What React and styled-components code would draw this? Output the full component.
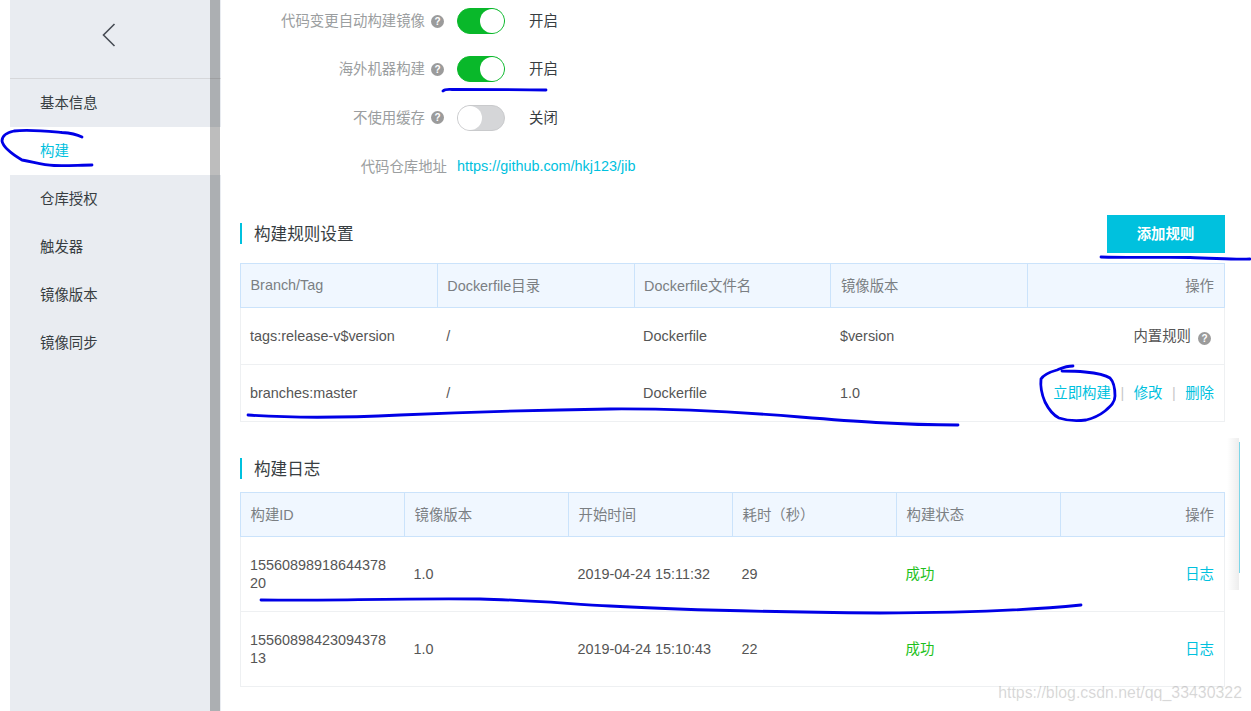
import React from 'react'
import styled, { createGlobalStyle } from 'styled-components'

const cjk = `"Liberation Sans", "Noto Sans CJK SC", sans-serif`

const rules = [
    { branch: 'tags:release-v$version', dir: '/', file: 'Dockerfile', version: '$version', builtin: true },
    { branch: 'branches:master', dir: '/', file: 'Dockerfile', version: '1.0' },
]

const logs = [
    { id: '1556089891864437820', version: '1.0', time: '2019-04-24 15:11:32', cost: '29' },
    { id: '1556089842309437813', version: '1.0', time: '2019-04-24 15:10:43', cost: '22' },
]

export default function App() {
    return (
        <>
            <GlobalStyle />
            <Page>
                <Sidebar>
                    <BackBar>
                        <svg width="16" height="26" viewBox="0 0 16 26" fill="none">
                            <path d="M13.5 2 L2.5 13 L13.5 24" stroke="#474c55" strokeWidth="1.6" />
                        </svg>
                    </BackBar>
                    <NavItem>基本信息</NavItem>
                    <NavItem $active>构建</NavItem>
                    <NavItem>仓库授权</NavItem>
                    <NavItem>触发器</NavItem>
                    <NavItem>镜像版本</NavItem>
                    <NavItem>镜像同步</NavItem>
                    <SideScroll />
                </Sidebar>

                <Main>
                    <FormRow>
                        <FormLabel><LabelText>代码变更自动构建镜像</LabelText><Help>?</Help></FormLabel>
                        <Toggle $on><Knob $on /></Toggle>
                        <ToggleText>开启</ToggleText>
                    </FormRow>
                    <FormRow>
                        <FormLabel><LabelText>海外机器构建</LabelText><Help>?</Help></FormLabel>
                        <Toggle $on><Knob $on /></Toggle>
                        <ToggleText>开启</ToggleText>
                    </FormRow>
                    <FormRow>
                        <FormLabel><LabelText>不使用缓存</LabelText><Help>?</Help></FormLabel>
                        <Toggle><Knob /></Toggle>
                        <ToggleText>关闭</ToggleText>
                    </FormRow>
                    <LinkRow>
                        <FormLabel $plain><LabelText>代码仓库地址</LabelText></FormLabel>
                        <RepoLink>https://github.com/hkj123/jib</RepoLink>
                    </LinkRow>

                    <SectionHead>
                        <SectionTitle>构建规则设置</SectionTitle>
                        <AddButton>添加规则</AddButton>
                    </SectionHead>
                    <Table>
                        <thead>
                            <tr>
                                <Th>Branch/Tag</Th>
                                <Th>Dockerfile目录</Th>
                                <Th>Dockerfile文件名</Th>
                                <Th>镜像版本</Th>
                                <Th $right>操作</Th>
                            </tr>
                        </thead>
                        <tbody>
                            {rules.map((r) => (
                                <tr key={r.branch}>
                                    <RuleCell>{r.branch}</RuleCell>
                                    <RuleCell>{r.dir}</RuleCell>
                                    <RuleCell>{r.file}</RuleCell>
                                    <RuleCell>{r.version}</RuleCell>
                                    {r.builtin ? (
                                        <RuleCell $right $cjk>内置规则<Help $wide>?</Help></RuleCell>
                                    ) : (
                                        <RuleCell $right $cjk>
                                            <Action>立即构建</Action>
                                            <Sep>|</Sep>
                                            <Action>修改</Action>
                                            <Sep>|</Sep>
                                            <Action>删除</Action>
                                        </RuleCell>
                                    )}
                                </tr>
                            ))}
                        </tbody>
                    </Table>

                    <LogHead>
                        <SectionTitle>构建日志</SectionTitle>
                    </LogHead>
                    <Table>
                        <thead>
                            <tr>
                                <Th>构建ID</Th>
                                <Th>镜像版本</Th>
                                <Th>开始时间</Th>
                                <Th>耗时（秒）</Th>
                                <Th>构建状态</Th>
                                <Th $right>操作</Th>
                            </tr>
                        </thead>
                        <tbody>
                            {logs.map((l) => (
                                <tr key={l.id}>
                                    <LogCell><BuildId>{l.id}</BuildId></LogCell>
                                    <LogCell>{l.version}</LogCell>
                                    <LogCell>{l.time}</LogCell>
                                    <LogCell>{l.cost}</LogCell>
                                    <LogCell $cjk><Success>成功</Success></LogCell>
                                    <LogCell $right $cjk><Action>日志</Action></LogCell>
                                </tr>
                            ))}
                        </tbody>
                    </Table>
                </Main>

                <Ink width="1251" height="711" viewBox="0 0 1251 711" fill="none">
                    <path d="M82 137 C76 134 70 133 62 132.500 C46 131 28 129 14 131 C5 133 2 137 2 141 C3 147 12 154 22 160 C34 162 42 165 54 165.500 C68 166 80 165 92 165" />
                    <path d="M443 91 C445 89 448 89.500 452 89.500 C480 89.500 520 89.500 546 90" />
                    <path d="M1101 257 C1130 258 1165 257 1190 257.500 C1215 258 1235 260 1250 259" />
                    <path d="M248 415 C290 418 340 418 400 415 C470 412 540 410 610 409 C680 408.500 740 412 800 417 C850 421 900 425 958 425" />
                    <path d="M1073 366 C1066 366 1062 368 1057 370 C1050 372 1044 374 1041 379 C1040 388 1042 395 1045 402 C1049 410 1053 415 1059 418 C1068 421 1078 421 1086 420 C1094 418 1100 415 1105 411 C1111 406 1115 402 1115 396 C1115 388 1114 382 1110 378 C1104 374 1095 373 1085 372 C1076 371 1068 371 1062 371" />
                    <path d="M261 600 C320 601 400 598 480 599 C530 600 570 604 610 606 C680 610 780 612 880 613 C960 613 1030 610 1081 605" />
                </Ink>
                <EdgeShadow />
                <Watermark>https://blog.csdn.net/qq_33430322</Watermark>
            </Page>
        </>
    )
}

const GlobalStyle = createGlobalStyle`
    html, body {
        margin: 0;
        padding: 0;
        background: #fff;
    }
    body {
        font-family: ${cjk};
        font-size: 14.4px;
        color: #555;
    }
`;
const Page = styled.div`
    position: relative;
    display: flex;
    width: 1251px;
    height: 711px;
    overflow: hidden;
    background: #fff;
`;
const Sidebar = styled.aside`
    position: relative;
    flex: none;
    width: 211px;
    margin-left: 10px;
    background: #e9ecf1;
`;
const SideScroll = styled.div`
    position: absolute;
    top: 0;
    bottom: 0;
    left: 200px;
    width: 10px;
    background: rgba(0, 0, 0, 0.26);
`;
const BackBar = styled.div`
    display: flex;
    justify-content: center;
    align-items: center;
    height: 79px;
    padding-right: 14px;
    padding-bottom: 8px;
    box-sizing: border-box;
    border-bottom: 1px solid #d6d7da;
`;
const NavItem = styled.div`
    height: 48px;
    line-height: 48px;
    padding-left: 30px;
    color: ${(p) => (p.$active ? '#00c1de' : '#373d41')};
    background: ${(p) => (p.$active ? '#fff' : 'transparent')};
`;
const Main = styled.main`
    flex: 1;
    min-width: 0;
    padding: 8px 26px 0 19px;
`;
const FormRow = styled.div`
    display: flex;
    align-items: center;
    height: 26px;
    margin-bottom: 22.4px;
`;
const LinkRow = styled(FormRow)`
    height: 28px;
    margin-bottom: 0;
`;
const FormLabel = styled.div`
    display: flex;
    justify-content: flex-end;
    align-items: center;
    width: 208px;
    padding-right: ${(p) => (p.$plain ? '1px' : '4px')};
    box-sizing: border-box;
    margin-right: 9px;
    color: #9b9ea0;
`;
const LabelText = styled.span`
    padding-bottom: 3px;
`;
const Help = styled.span`
    display: inline-flex;
    justify-content: center;
    align-items: center;
    flex: none;
    width: 13px;
    height: 13px;
    margin-left: ${(p) => (p.$wide ? '7px' : '6px')};
    margin-right: ${(p) => (p.$wide ? '3px' : '0')};
    border-radius: 50%;
    background: #9b9b9b;
    color: #fff;
    font-size: 10px;
    font-weight: 700;
    vertical-align: -1px;
`;
const Toggle = styled.div`
    position: relative;
    flex: none;
    width: 48px;
    height: 26px;
    box-sizing: border-box;
    border-radius: 13px;
    border: 1px solid ${(p) => (p.$on ? '#09b82a' : '#c9cacc')};
    background: ${(p) => (p.$on ? '#09b82a' : '#d5d6d8')};
`;
const Knob = styled.span`
    position: absolute;
    top: 0;
    left: ${(p) => (p.$on ? '22px' : '0')};
    width: 24px;
    height: 24px;
    border-radius: 50%;
    background: #fff;
`;
const ToggleText = styled.div`
    margin-left: 24px;
    padding-bottom: 3px;
    color: #373d41;
`;
const RepoLink = styled.a`
    padding-bottom: 2px;
    color: #00c1de;
`;
const SectionHead = styled.div`
    display: flex;
    justify-content: space-between;
    align-items: center;
    height: 38px;
    margin-top: 33.9px;
    margin-bottom: 10px;
`;
const LogHead = styled.div`
    display: flex;
    align-items: center;
    height: 22px;
    margin-top: 36px;
    margin-bottom: 12px;
`;
const SectionTitle = styled.h3`
    margin: 0 0 1px;
    height: 21px;
    line-height: 24px;
    padding-left: 12px;
    border-left: 2px solid #00c1de;
    font-size: 16.6px;
    font-weight: 400;
    color: #373d41;
`;
const AddButton = styled.button`
    width: 118px;
    height: 38px;
    padding: 0 1px 3px 0;
    border: none;
    background: #00c1de;
    color: #fff;
    font-family: inherit;
    font-size: 14.4px;
    font-weight: 700;
`;
const Table = styled.table`
    width: 985px;
    table-layout: fixed;
    border-collapse: collapse;
    font-size: 14.4px;
`;
const Th = styled.th`
    height: 44px;
    padding: 0 10px 2px 9.5px;
    box-sizing: border-box;
    background: #f0f7ff;
    border: 1px solid #cbe3fb;
    color: #7b7f83;
    font-weight: 400;
    text-align: ${(p) => (p.$right ? 'right' : 'left')};
`;
const Td = styled.td`
    padding: 0 10px ${(p) => (p.$cjk ? '3px' : '0')} 9px;
    box-sizing: border-box;
    border-top: 1px solid #eef0f2;
    border-bottom: 1px solid #eef0f2;
    color: #555;
    text-align: ${(p) => (p.$right ? 'right' : 'left')};
    &:first-child {
        border-left: 1px solid #eef0f2;
    }
    &:last-child {
        border-right: 1px solid #eef0f2;
    }
`;
const RuleCell = styled(Td)`
    height: 57px;
`;
const LogCell = styled(Td)`
    height: 75px;
`;
const BuildId = styled.div`
    width: 138px;
    line-height: 18px;
    word-break: break-all;
`;
const Action = styled.a`
    color: #00c1de;
`;
const Sep = styled.span`
    margin: 0 9.5px;
    color: #c8c8c8;
`;
const Success = styled.span`
    color: #1dc11d;
`;
const Ink = styled.svg`
    position: absolute;
    top: 0;
    left: 0;
    pointer-events: none;
    path {
        stroke: #0000e6;
        stroke-width: 2.8;
        stroke-linecap: round;
        stroke-linejoin: round;
    }
`;
const EdgeShadow = styled.div`
    position: absolute;
    top: 438px;
    left: 1227px;
    width: 12px;
    height: 152px;
    background: linear-gradient(to right, rgba(0, 0, 0, 0), rgba(0, 0, 0, 0.07));
    &::after {
        content: '';
        position: absolute;
        top: 4px;
        left: 12px;
        width: 1px;
        height: 131px;
        background: #7dd6e8;
    }
`;
const Watermark = styled.div`
    position: absolute;
    right: 9px;
    bottom: 9px;
    font-size: 15.9px;
    color: rgba(0, 0, 0, 0.11);
    text-shadow: 0 0 1px rgba(0, 0, 0, 0.08);
`;
